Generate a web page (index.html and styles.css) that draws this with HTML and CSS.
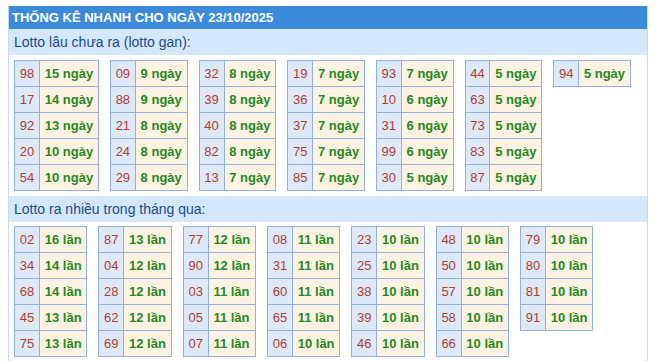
FILE: index.html
```html
<!DOCTYPE html>
<html lang="vi">
<head>
<meta charset="utf-8">
<title>Thống kê nhanh</title>
<link rel="stylesheet" href="styles.css">
</head>
<body>
<div class="box">
  <div class="title">THỐNG KÊ NHANH CHO NGÀY 23/10/2025</div>
  <div class="sub">Lotto lâu chưa ra (lotto gan):</div>
  <div class="tables">
    <table class="lt"><tr><td class="n">98</td><td class="v">15 ngày</td></tr><tr><td class="n">17</td><td class="v">14 ngày</td></tr><tr><td class="n">92</td><td class="v">13 ngày</td></tr><tr><td class="n">20</td><td class="v">10 ngày</td></tr><tr><td class="n">54</td><td class="v">10 ngày</td></tr></table>
    <table class="lt"><tr><td class="n">09</td><td class="v">9 ngày</td></tr><tr><td class="n">88</td><td class="v">9 ngày</td></tr><tr><td class="n">21</td><td class="v">8 ngày</td></tr><tr><td class="n">24</td><td class="v">8 ngày</td></tr><tr><td class="n">29</td><td class="v">8 ngày</td></tr></table>
    <table class="lt"><tr><td class="n">32</td><td class="v">8 ngày</td></tr><tr><td class="n">39</td><td class="v">8 ngày</td></tr><tr><td class="n">40</td><td class="v">8 ngày</td></tr><tr><td class="n">82</td><td class="v">8 ngày</td></tr><tr><td class="n">13</td><td class="v">7 ngày</td></tr></table>
    <table class="lt"><tr><td class="n">19</td><td class="v">7 ngày</td></tr><tr><td class="n">36</td><td class="v">7 ngày</td></tr><tr><td class="n">37</td><td class="v">7 ngày</td></tr><tr><td class="n">75</td><td class="v">7 ngày</td></tr><tr><td class="n">85</td><td class="v">7 ngày</td></tr></table>
    <table class="lt"><tr><td class="n">93</td><td class="v">7 ngày</td></tr><tr><td class="n">10</td><td class="v">6 ngày</td></tr><tr><td class="n">31</td><td class="v">6 ngày</td></tr><tr><td class="n">99</td><td class="v">6 ngày</td></tr><tr><td class="n">30</td><td class="v">5 ngày</td></tr></table>
    <table class="lt"><tr><td class="n">44</td><td class="v">5 ngày</td></tr><tr><td class="n">63</td><td class="v">5 ngày</td></tr><tr><td class="n">73</td><td class="v">5 ngày</td></tr><tr><td class="n">83</td><td class="v">5 ngày</td></tr><tr><td class="n">87</td><td class="v">5 ngày</td></tr></table>
    <table class="lt"><tr><td class="n">94</td><td class="v">5 ngày</td></tr></table>
  </div>
  <div class="sub sub-second">Lotto ra nhiều trong tháng qua:</div>
  <div class="tables tables-second">
    <table class="lt"><tr><td class="n">02</td><td class="v">16 lần</td></tr><tr><td class="n">34</td><td class="v">14 lần</td></tr><tr><td class="n">68</td><td class="v">14 lần</td></tr><tr><td class="n">45</td><td class="v">13 lần</td></tr><tr><td class="n">75</td><td class="v">13 lần</td></tr></table>
    <table class="lt"><tr><td class="n">87</td><td class="v">13 lần</td></tr><tr><td class="n">04</td><td class="v">12 lần</td></tr><tr><td class="n">28</td><td class="v">12 lần</td></tr><tr><td class="n">62</td><td class="v">12 lần</td></tr><tr><td class="n">69</td><td class="v">12 lần</td></tr></table>
    <table class="lt"><tr><td class="n">77</td><td class="v">12 lần</td></tr><tr><td class="n">90</td><td class="v">12 lần</td></tr><tr><td class="n">03</td><td class="v">11 lần</td></tr><tr><td class="n">05</td><td class="v">11 lần</td></tr><tr><td class="n">07</td><td class="v">11 lần</td></tr></table>
    <table class="lt"><tr><td class="n">08</td><td class="v">11 lần</td></tr><tr><td class="n">31</td><td class="v">11 lần</td></tr><tr><td class="n">60</td><td class="v">11 lần</td></tr><tr><td class="n">65</td><td class="v">11 lần</td></tr><tr><td class="n">06</td><td class="v">10 lần</td></tr></table>
    <table class="lt"><tr><td class="n">23</td><td class="v">10 lần</td></tr><tr><td class="n">25</td><td class="v">10 lần</td></tr><tr><td class="n">38</td><td class="v">10 lần</td></tr><tr><td class="n">39</td><td class="v">10 lần</td></tr><tr><td class="n">46</td><td class="v">10 lần</td></tr></table>
    <table class="lt"><tr><td class="n">48</td><td class="v">10 lần</td></tr><tr><td class="n">50</td><td class="v">10 lần</td></tr><tr><td class="n">57</td><td class="v">10 lần</td></tr><tr><td class="n">58</td><td class="v">10 lần</td></tr><tr><td class="n">66</td><td class="v">10 lần</td></tr></table>
    <table class="lt"><tr><td class="n">79</td><td class="v">10 lần</td></tr><tr><td class="n">80</td><td class="v">10 lần</td></tr><tr><td class="n">81</td><td class="v">10 lần</td></tr><tr><td class="n">91</td><td class="v">10 lần</td></tr></table>
  </div>
</div>
</body>
</html>
```
FILE: styles.css
```css
html, body {
  margin: 0;
  padding: 0;
  background: #ffffff;
}
body {
  font-family: "Liberation Sans", Arial, sans-serif;
}
.box {
  box-sizing: border-box;
  width: 640px;
  margin: 6px 0 0 8px;
  border-left: 1px solid #c9d8ee;
  border-right: 1px solid #c9d8ee;
  min-height: 360px;
}
.title {
  height: 23px;
  line-height: 23px;
  padding-left: 3px;
  background: #3c8bdb;
  color: #ffffff;
  font-size: 13px;
  font-weight: bold;
}
.sub {
  height: 26px;
  line-height: 26px;
  padding-left: 5px;
  background: #d5e7fa;
  color: #1c4c8c;
  font-size: 14px;
}
.sub-second {
  margin-top: 5px;
}
.tables {
  display: flex;
  align-items: flex-start;
  gap: 11px;
  padding: 5px 0 0 5px;
}
.tables-second {
  padding-top: 4px;
}
.lt {
  border-collapse: collapse;
  font-size: 13px;
}
.lt td {
  height: 25px;
  padding: 0 4.75px;
  border: 1px solid #8fb0e1;
  line-height: 25px;
  white-space: nowrap;
}
.lt .n {
  background: #dde9f9;
  color: #b13d27;
}
.lt .v {
  background: #fef3e3;
  color: #1f8a1f;
  font-weight: bold;
}
```
